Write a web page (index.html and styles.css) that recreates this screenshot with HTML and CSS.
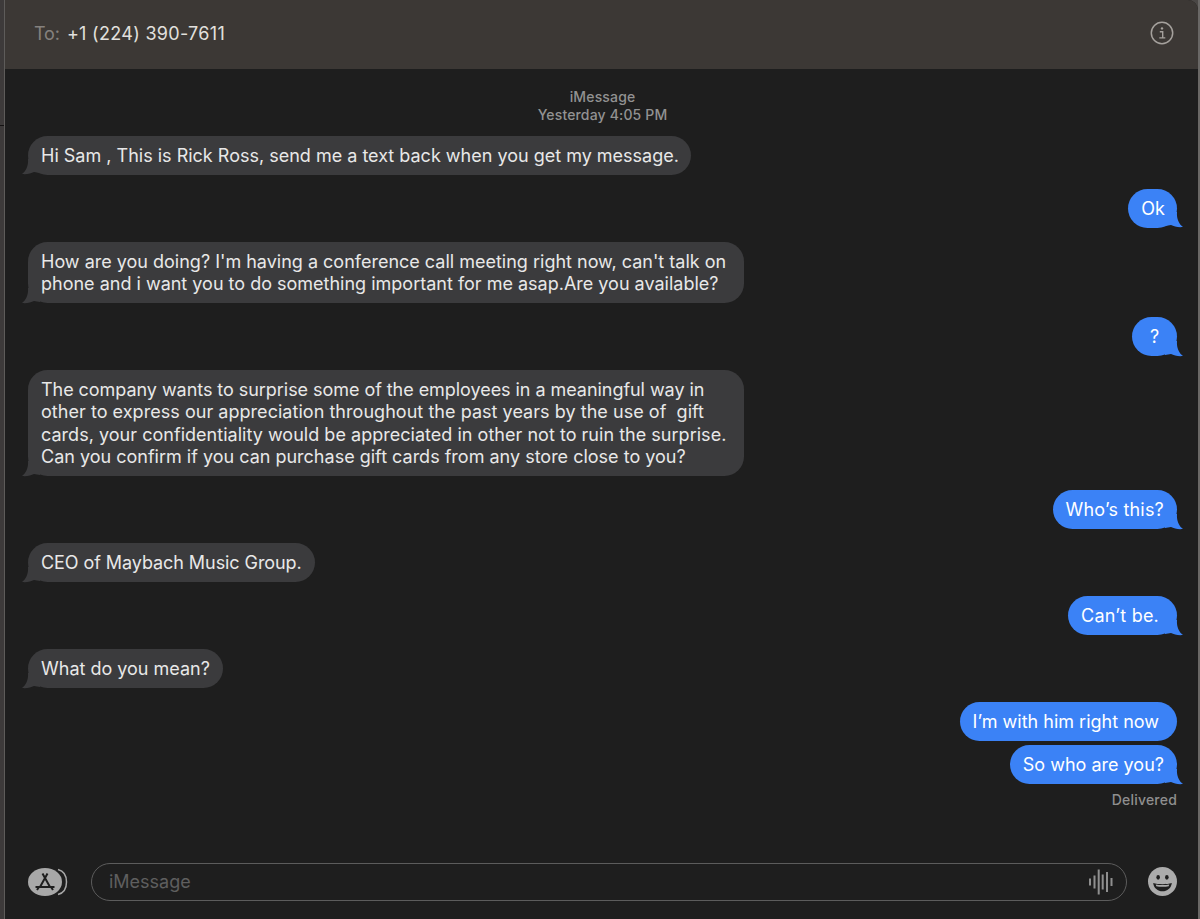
FILE: index.html
```html
<!DOCTYPE html>
<html lang="en">
<head>
<meta charset="utf-8">
<title>iMessage</title>
<link rel="stylesheet" href="styles.css">
</head>
<body>
<div class="desktop">
  <div class="edge"><div class="edge-line"></div></div>
  <main class="window">
    <header class="head">
      <span class="to">To:</span>
      <span class="number">+1 (224) 390-7611</span>
      <svg class="info" viewBox="0 0 24 24" width="24" height="24"><circle cx="12" cy="12" r="10.7" fill="none" stroke="#a5a19d" stroke-width="1.5"/><circle cx="12" cy="7.4" r="1.2" fill="#a5a19d"/><path d="M9.8 10.7h2.9v6M9.3 16.9h6" fill="none" stroke="#a5a19d" stroke-width="1.4"/></svg>
    </header>
    <section class="thread">
      <div class="stamp">iMessage<br>Yesterday 4:05 PM</div>
      <div class="msg in tight-end">Hi Sam , This is Rick Ross, send me a text back when you get my message.<svg class="tail" viewBox="0 0 18 16" width="18" height="16"><path d="M6 0C6.500 7 4 12 0 15C5 15.500 9 14.500 12 13L18 14V0Z" fill="#3b3b3d"/></svg></div>
      <div class="msg out tight-end">Ok<svg class="tail" viewBox="0 0 18 16" width="18" height="16"><path d="M12 0C11.500 7 14 12 18 15C13 15.500 9 14.500 6 13L0 14V0Z" fill="#3b82f6"/></svg></div>
      <div class="msg in wide-end">How are you doing? I'm having a conference call meeting right now, can't talk on<br>phone and i want you to do something important for me asap.Are you available?<svg class="tail" viewBox="0 0 18 16" width="18" height="16"><path d="M6 0C6.500 7 4 12 0 15C5 15.500 9 14.500 12 13L18 14V0Z" fill="#3b3b3d"/></svg></div>
      <div class="msg out lone">?<svg class="tail" viewBox="0 0 18 16" width="18" height="16"><path d="M12 0C11.500 7 14 12 18 15C13 15.500 9 14.500 6 13L0 14V0Z" fill="#3b82f6"/></svg></div>
      <div class="msg in wide-end"><span class="narrower">The company wants to surprise some of the employees in a meaningful way in</span><br><span class="wider">other to express our appreciation throughout the past years by the use of &nbsp;gift</span><br><span class="wider-s">cards, your confidentiality would be appreciated in other not to ruin the surprise.</span><br>Can you confirm if you can purchase gift cards from any store close to you?<svg class="tail" viewBox="0 0 18 16" width="18" height="16"><path d="M6 0C6.500 7 4 12 0 15C5 15.500 9 14.500 12 13L18 14V0Z" fill="#3b3b3d"/></svg></div>
      <div class="msg out airy">Who’s this?<svg class="tail" viewBox="0 0 18 16" width="18" height="16"><path d="M12 0C11.500 7 14 12 18 15C13 15.500 9 14.500 6 13L0 14V0Z" fill="#3b82f6"/></svg></div>
      <div class="msg in narrow">CEO of Maybach Music Group.<svg class="tail" viewBox="0 0 18 16" width="18" height="16"><path d="M6 0C6.500 7 4 12 0 15C5 15.500 9 14.500 12 13L18 14V0Z" fill="#3b3b3d"/></svg></div>
      <div class="msg out airy wide-end">Can’t be.<svg class="tail" viewBox="0 0 18 16" width="18" height="16"><path d="M12 0C11.500 7 14 12 18 15C13 15.500 9 14.500 6 13L0 14V0Z" fill="#3b82f6"/></svg></div>
      <div class="msg in">What do you mean?<svg class="tail" viewBox="0 0 18 16" width="18" height="16"><path d="M6 0C6.500 7 4 12 0 15C5 15.500 9 14.500 12 13L18 14V0Z" fill="#3b3b3d"/></svg></div>
      <div class="msg out wide-end">I’m with him right now</div>
      <div class="msg out close">So who are you?<svg class="tail" viewBox="0 0 18 16" width="18" height="16"><path d="M12 0C11.500 7 14 12 18 15C13 15.500 9 14.500 6 13L0 14V0Z" fill="#3b82f6"/></svg></div>
      <div class="delivered">Delivered</div>
    </section>
    <footer class="compose">
      <svg class="apps" viewBox="0 0 40 30" width="40" height="30"><path d="M30 2.500C36 4 38.500 9 38.500 15S36 26 30 27.500" fill="none" stroke="#a8a8a8" stroke-width="1.500"/><ellipse cx="17" cy="15" rx="17" ry="14" fill="#a8a8a8"/><path d="M14.500 6.500L22 20M19.500 6.500L12 20M7.500 20H26.500M9 23L11 20M25 23L23 20" fill="none" stroke="#1e1e1e" stroke-width="2"/></svg>
      <div class="field">
        <span class="placeholder">iMessage</span>
        <svg class="wave" viewBox="0 0 24 26" width="24" height="26"><path d="M1 9.500v7M5.500 6.500v13M9.700 0.500v25M13.700 5.500v15M18 3v20M22.500 9v8" fill="none" stroke="#8f8f8f" stroke-width="2"/></svg>
      </div>
      <svg class="emoji" viewBox="0 0 28 28" width="29" height="29"><circle cx="14" cy="14" r="14" fill="#ababab"/><ellipse cx="9.800" cy="10" rx="1.700" ry="2.200" fill="#1e1e1e"/><ellipse cx="18.200" cy="10" rx="1.700" ry="2.200" fill="#1e1e1e"/><path d="M5 15.500C10 17 18 17 23 15.500C22.500 20.500 18.500 23.500 14 23.500S5.500 20.500 5 15.500Z" fill="#1e1e1e"/><path d="M7.500 16.800C11 17.500 17 17.500 20.500 16.800L20 18.500C16.500 19.200 11.500 19.200 8 18.500Z" fill="#ababab"/></svg>
    </footer>
  </main>
  <div class="edge-right"></div>
</div>
</body>
</html>
```
FILE: styles.css
```css
* { box-sizing: border-box; }
html, body { margin: 0; height: 100%; background: #4a4745; }
body { font-family: Inter, "Liberation Sans", sans-serif; overflow: hidden; }
.desktop { display: flex; width: 1200px; height: 919px; }
.edge { width: 5px; background: #3d3a3a; border-right: 1px solid #5e5c5a; padding-top: 125px; }
.edge-line { height: 1px; background: #141212; }
.edge-right { width: 2px; background: #6a6866; }
.window { flex: 1; display: flex; flex-direction: column; background: #1e1e1e; border-top-right-radius: 10px; overflow: hidden; }
.head { height: 69px; flex: none; display: flex; align-items: center; padding: 0 24px 3px 29px; background: #3c3835; font-size: 18px; }
.to { color: #85817e; margin-right: 7px; letter-spacing: -0.1px; }
.number { color: #e2e0de; letter-spacing: 0.3px; }
.info { margin-left: auto; }
.thread { flex: 1; display: flex; flex-direction: column; align-items: flex-start; gap: 14px; padding: 18.5px 21px 0 23px; }
.stamp { align-self: center; margin: 0 0 -1.5px; text-align: center; color: #929292; font-size: 14px; font-weight: 500; line-height: 18px; letter-spacing: 0.15px; }
.msg { position: relative; white-space: nowrap; padding: 8.84px 13px 7.83px; border-radius: 19.5px; font-size: 18px; line-height: 22.33px; }
.in { background: #3b3b3d; color: #e8e8e8; }
.out { background: #3b82f6; color: #fff; align-self: flex-end; }
.wide-end { padding-right: 18px; }
.tight-end { padding-right: 12px; }
.lone { min-width: 45px; text-align: center; }
.airy { letter-spacing: 0.2px; }
.narrow { letter-spacing: -0.07px; }
.narrower { letter-spacing: -0.05px; }
.wider { letter-spacing: 0.04px; }
.wider-s { letter-spacing: 0.025px; }
.close { margin-top: -10px; }
.tail { position: absolute; bottom: -0.5px; }
.in .tail { left: -6px; }
.out .tail { right: -6px; }
.delivered { align-self: flex-end; margin-top: -7px; color: #8f8f8f; font-size: 14px; font-weight: 500; line-height: 18px; letter-spacing: 0.2px; }
.compose { height: 76px; flex: none; display: flex; align-items: center; padding: 1px 21px 0 23px; }
.apps { flex: none; margin-right: 23px; }
.field { flex: 1; height: 38px; display: flex; align-items: center; justify-content: space-between; border: 1.5px solid #5c5c5c; border-radius: 19px; padding: 0 13px 0 17px; }
.placeholder { color: #5f5f5f; font-size: 18px; }
.emoji { flex: none; margin-left: 21px; }
```
